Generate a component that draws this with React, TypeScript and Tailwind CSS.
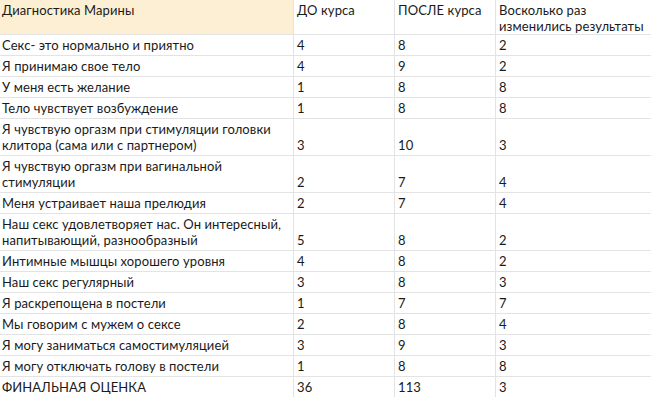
import React from "react";

const rows: [string, string, string, string][] = [
  ["Секс- это нормально и приятно", "4", "8", "2"],
  ["Я принимаю свое тело", "4", "9", "2"],
  ["У меня есть желание", "1", "8", "8"],
  ["Тело чувствует возбуждение", "1", "8", "8"],
  ["Я чувствую оргазм при стимуляции головки клитора (сама или с партнером)", "3", "10", "3"],
  ["Я чувствую оргазм при вагинальной стимуляции", "2", "7", "4"],
  ["Меня устраивает наша прелюдия", "2", "7", "4"],
  ["Наш секс удовлетворяет нас. Он интересный, напитывающий, разнообразный", "5", "8", "2"],
  ["Интимные мышцы хорошего уровня", "4", "8", "2"],
  ["Наш секс регулярный", "3", "8", "3"],
  ["Я раскрепощена в постели", "1", "7", "7"],
  ["Мы говорим с мужем о сексе", "2", "8", "4"],
  ["Я могу заниматься самостимуляцией", "3", "9", "3"],
  ["Я могу отключать голову в постели", "1", "8", "8"],
  ["ФИНАЛЬНАЯ ОЦЕНКА", "36", "113", "3"],
];

export default function App() {
  return (
    <div
      className="w-[651px] h-[397px] overflow-hidden bg-white text-[13px] leading-[16px] tracking-[0.1px] text-[#1a1a1a]"
      style={{ fontFamily: "Lato, 'Noto Sans', sans-serif" }}
    >
      <div className="grid grid-cols-[294px_101px_101px_1fr]">
        <div className="bg-[#fcefd4] border-r border-b border-[#e3e3e3] pl-[2px] pr-[3px] pt-[2px] h-[35px]">
          Диагностика Марины
        </div>
        <div className="border-r border-b border-[#e3e3e3] px-[3px] pt-[2px]">ДО курса</div>
        <div className="border-r border-b border-[#e3e3e3] px-[3px] pt-[2px]">ПОСЛЕ курса</div>
        <div className="border-b border-[#e3e3e3] px-[3px] pt-[2px]">
          Восколько раз изменились результаты
        </div>
        {rows.map((r, i) => (
          <React.Fragment key={i}>
            <div className="flex items-end border-r border-b border-[#e3e3e3] pl-[2px] pr-[3px] pt-[2px] pb-[2px]">
              {r[0]}
            </div>
            <div className="flex items-end border-r border-b border-[#e3e3e3] px-[3px] pt-[2px] pb-[2px]">
              {r[1]}
            </div>
            <div className="flex items-end border-r border-b border-[#e3e3e3] px-[3px] pt-[2px] pb-[2px]">
              {r[2]}
            </div>
            <div className="flex items-end border-b border-[#e3e3e3] px-[3px] pt-[2px] pb-[2px]">
              {r[3]}
            </div>
          </React.Fragment>
        ))}
      </div>
    </div>
  );
}
